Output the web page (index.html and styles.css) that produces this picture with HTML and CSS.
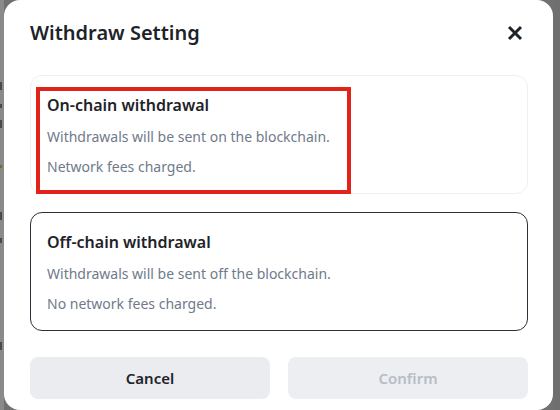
FILE: index.html
```html
<!DOCTYPE html>
<html lang="en">
<head>
<meta charset="utf-8">
<title>Withdraw Setting</title>
<link rel="stylesheet" href="styles.css">
</head>
<body>
<div class="screen">
  <div class="backdrop-left">
    <span class="mark m1"></span>
    <span class="mark m2"></span>
    <span class="mark m3"></span>
    <span class="mark m4 gold"></span>
    <span class="mark m5"></span>
    <span class="mark m6"></span>
    <span class="mark m7"></span>
  </div>
  <div class="modal">
    <div class="header">
      <h1 class="title">Withdraw Setting</h1>
      <button class="close" aria-label="Close">
        <svg width="16" height="16" viewBox="0 0 16 16"><path d="M2 2 L14 14 M14 2 L2 14" stroke="#1e2329" stroke-width="3" stroke-linecap="butt"/></svg>
      </button>
    </div>
    <div class="options">
      <div class="option">
        <div class="option-title">On-chain withdrawal</div>
        <div class="option-desc">Withdrawals will be sent on the blockchain.</div>
        <div class="option-desc">Network fees charged.</div>
        <div class="highlight"></div>
      </div>
      <div class="option selected">
        <div class="option-title">Off-chain withdrawal</div>
        <div class="option-desc">Withdrawals will be sent off the blockchain.</div>
        <div class="option-desc">No network fees charged.</div>
      </div>
    </div>
    <div class="actions">
      <button class="btn cancel">Cancel</button>
      <button class="btn confirm" disabled>Confirm</button>
    </div>
  </div>
  <div class="backdrop-right"></div>
</div>
</body>
</html>
```
FILE: styles.css
```css
html, body {
  margin: 0;
  padding: 0;
}
body {
  width: 560px;
  height: 410px;
  overflow: hidden;
  background: #717171;
  font-family: "Noto Sans", "Open Sans", Arial, sans-serif;
}
.screen {
  display: flex;
  height: 410px;
}
.backdrop-left {
  width: 4px;
  flex: none;
  background: #8a8a8a;
  position: relative;
  overflow: hidden;
}
.mark {
  position: absolute;
  left: 0;
  width: 2px;
  height: 8px;
  background: #4a4a4a;
}
.mark.gold { background: #7a6a2a; height: 3px; }
.m1 { top: 82px; }
.m2 { top: 104px; height: 4px; }
.m3 { top: 120px; }
.m4 { top: 165px; }
.m5 { top: 212px; }
.m6 { top: 238px; height: 5px; }
.m7 { top: 342px; }
.backdrop-right {
  flex: 1;
  background: #6f6f6f;
}
.modal {
  width: 549px;
  flex: none;
  height: 410px;
  box-sizing: border-box;
  background: #ffffff;
  border-radius: 16px;
  padding: 19px 25px 0 26px;
}
.header {
  display: flex;
  align-items: center;
  justify-content: space-between;
  height: 28px;
}
.title {
  margin: 0;
  font-size: 20px;
  line-height: 28px;
  font-weight: 600;
  color: #1e2329;
}
.close {
  border: 0;
  background: none;
  padding: 0;
  width: 16px;
  height: 16px;
  margin-right: 5px;
  display: flex;
}
.options {
  margin-top: 28px;
  display: flex;
  flex-direction: column;
  gap: 18px;
}
.option {
  position: relative;
  border: 1px solid #eeeff1;
  border-radius: 12px;
  padding: 17px 16px 16px 16px;
}
.option.selected {
  border-color: #2b3139;
}
.option-title {
  font-size: 16px;
  line-height: 24px;
  font-weight: 600;
  color: #1e2329;
}
.option-desc {
  margin-top: 10px;
  font-size: 14px;
  line-height: 20px;
  color: #707a8a;
}
.highlight {
  position: absolute;
  left: 5px;
  top: 11px;
  width: 315px;
  height: 107px;
  box-sizing: border-box;
  border: 4px solid #e2231a;
}
.actions {
  margin-top: 26px;
  display: flex;
  gap: 18px;
}
.btn {
  flex: 1;
  height: 42px;
  border: 0;
  border-radius: 8px;
  font-family: inherit;
  font-size: 15px;
  font-weight: 600;
}
.cancel {
  background: #eaecef;
  color: #1e2329;
}
.confirm {
  background: #eceef1;
  color: #b7bdc6;
}
```
